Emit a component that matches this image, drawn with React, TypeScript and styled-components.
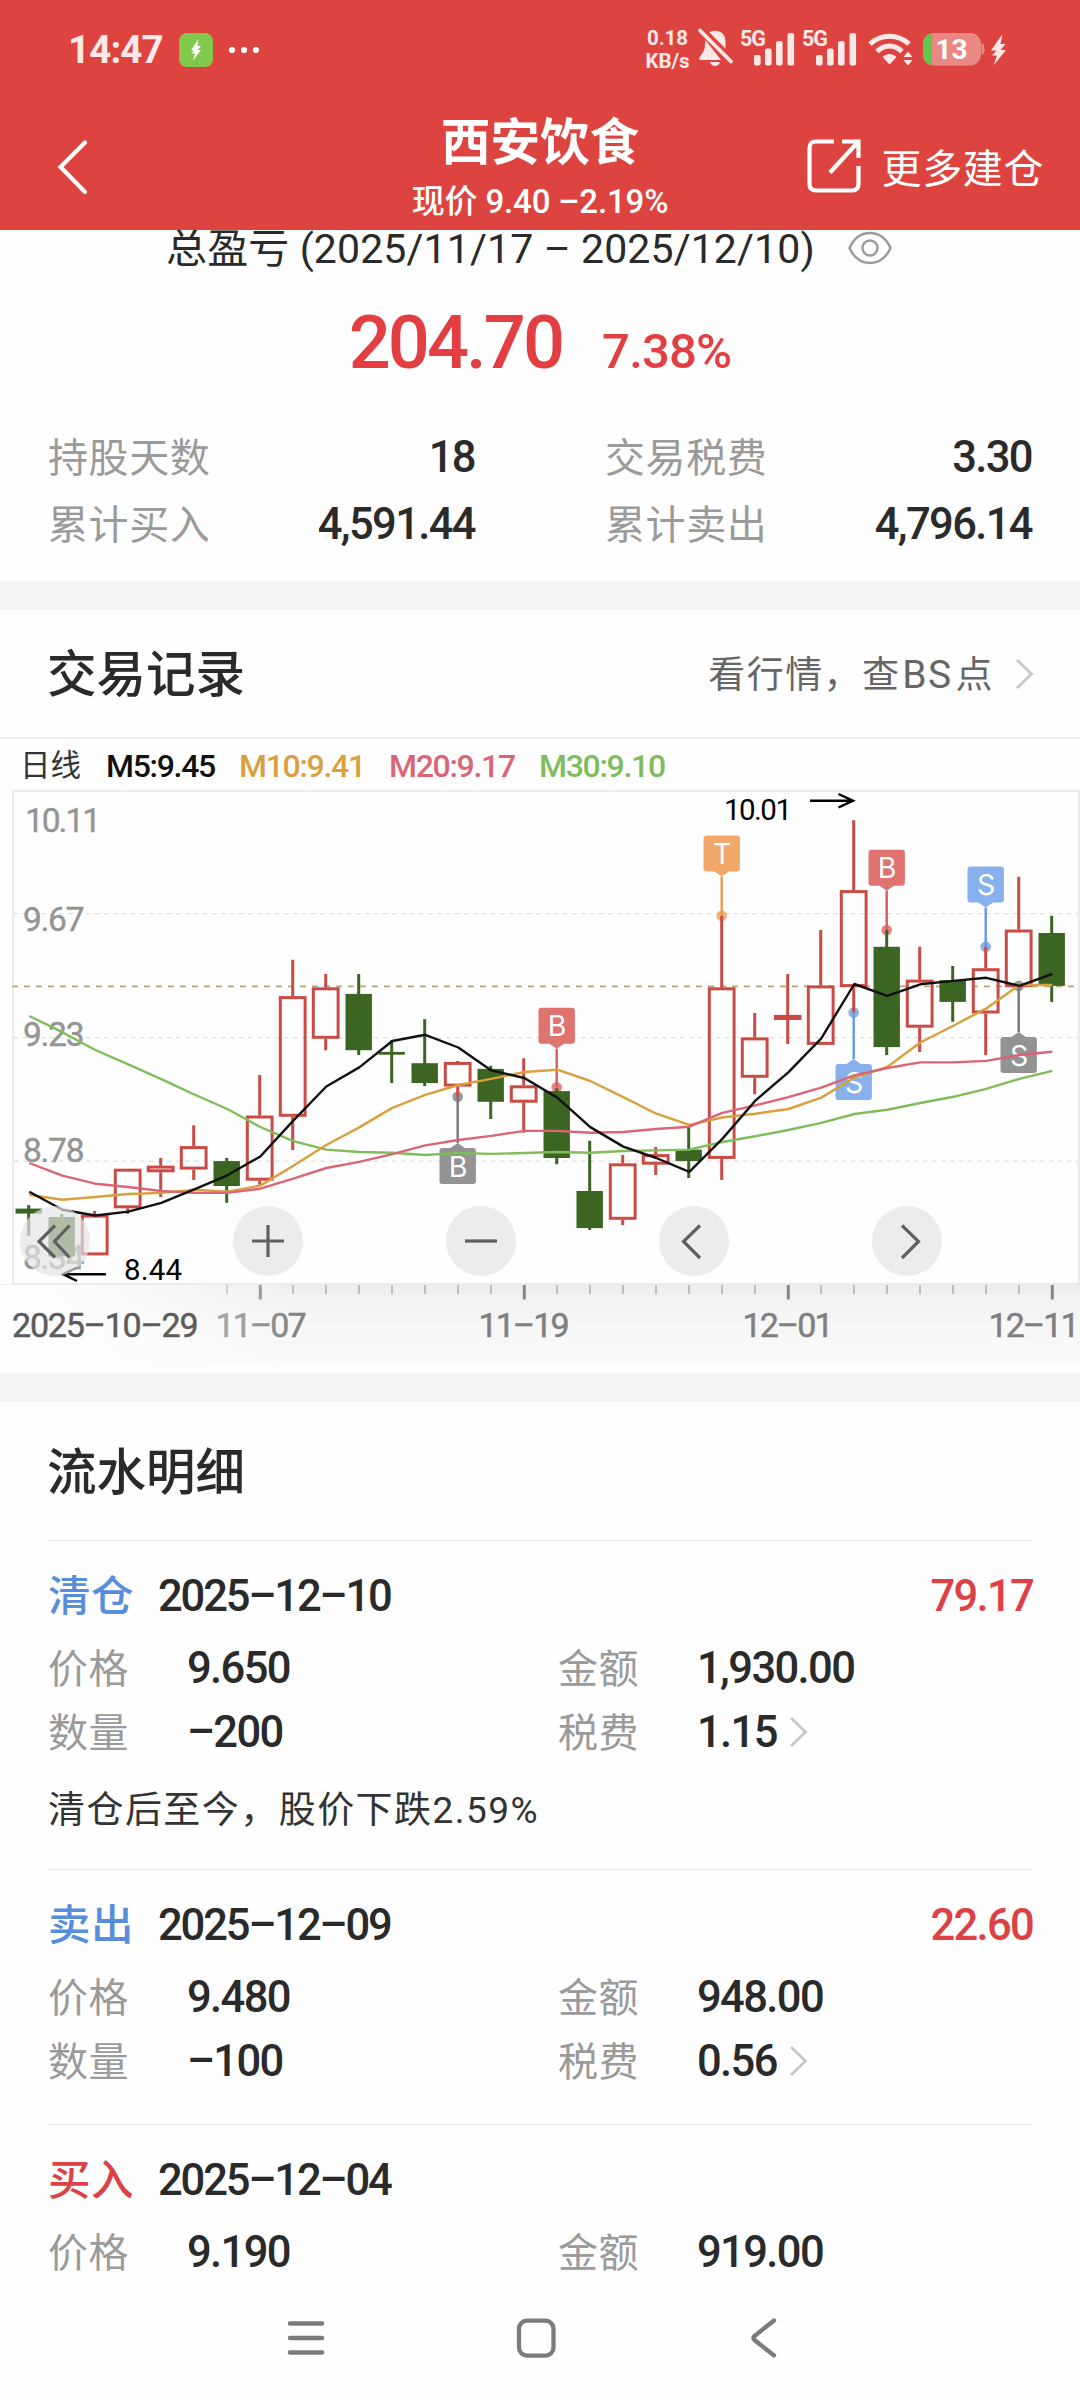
import React from "react";
import styled, { createGlobalStyle } from "styled-components";

const GlobalStyle = createGlobalStyle`
  *, *::before, *::after { box-sizing: border-box; }
  body { margin: 0; background: #fff; }
`;

const Screen = styled.div`
  width: 1080px;
  height: 2400px;
  display: flex;
  flex-direction: column;
  overflow: hidden;
  background: #fefefe;
  color: #2a2a2a;
  font-family: Roboto, "Noto Sans CJK SC", sans-serif;
`;

const TopArea = styled.header`
  flex: none;
  height: 230px;
  background: #dd443f;
  color: #fff;
  display: flex;
  flex-direction: column;
  position: relative;
  z-index: 1;
`;

const StatusBar = styled.div`
  height: 100px;
  display: flex;
  align-items: center;
  justify-content: space-between;
  padding: 0 72px 0 68px;
  color: #ffe9e8;
`;

const StatusGroup = styled.div`
  display: flex;
  align-items: center;
`;

const SystemIcons = styled.div`
  display: flex;
  align-items: center;
  margin-top: -8px;
`;

const Clock = styled.span`
  width: 111px;
  font-size: 38.5px;
  font-weight: 700;
  letter-spacing: -0.9px;
  line-height: 40px;
`;

const Speed = styled.div`
  width: 44px;
  margin-right: 1.5px;
  display: flex;
  flex-direction: column;
  align-items: center;
  font-size: 20.5px;
  font-weight: 700;
  line-height: 23px;
  white-space: nowrap;
`;

const Signals = styled.div`
  display: flex;
  margin: 0 6px 0 -3px;
`;

const TitleBar = styled.div`
  height: 130px;
  display: grid;
  grid-template-columns: 1fr 400px 1fr;
  align-items: center;
`;

const BackSlot = styled.div`
  padding: 3px 0 0 56px;
  display: flex;
`;

const TitleBlock = styled.div`
  display: flex;
  flex-direction: column;
  align-items: center;
  padding-top: 8px;
`;

const Title = styled.h1`
  margin: 0;
  font-size: 49.5px;
  line-height: 66px;
  font-weight: 700;
`;

const Quote = styled.div`
  font-size: 33px;
  line-height: 52px;
  font-weight: 500;
  letter-spacing: -0.15px;
  white-space: pre;
`;

const MoreLink = styled.div`
  display: flex;
  align-items: center;
  justify-content: flex-end;
  gap: 21px;
  padding: 1px 36px 0 0;
  font-size: 40px;
  letter-spacing: 0.6px;
`;

const Content = styled.main`
  flex: 1;
  min-height: 0;
  overflow: hidden;
`;

const Summary = styled.section`
  height: 351px;
  overflow: hidden;
`;

const Period = styled.div`
  height: 60px;
  margin-top: -15px;
  padding-left: 166px;
  display: flex;
  align-items: center;
  gap: 34px;
  font-size: 41px;
  white-space: pre;

  svg {
    margin-top: 5px;
  }
`;

const PeriodText = styled.span`
  width: 648px;
  letter-spacing: 0.13px;
`;

const ProfitRow = styled.div`
  height: 118px;
  display: flex;
  justify-content: center;
  align-items: baseline;
  gap: 40px;
  color: #e33e41;
  font-weight: 500;
  line-height: 136px;
`;

const Profit = styled.span`
  font-size: 74px;
  letter-spacing: -2.9px;
`;

const ProfitRate = styled.span`
  font-size: 49px;
  letter-spacing: -0.8px;
`;

const StatGrid = styled.div`
  display: grid;
  grid-template-columns: 427px 427px;
  grid-auto-rows: 67px;
  column-gap: 130px;
  padding: 29px 0 0 48px;
`;

const Stat = styled.div`
  display: flex;
  align-items: center;
  justify-content: space-between;
`;

const Label = styled.span<{ $drop?: number }>`
  padding-top: ${(p) => p.$drop ?? 3}px;
  font-size: 40px;
  letter-spacing: 0.6px;
  line-height: 56px;
  color: #9a9a9a;
`;

const Figure = styled.span<{ $drop?: number }>`
  padding-top: ${(p) => p.$drop ?? 0}px;
  font-size: 43.5px;
  letter-spacing: -1.6px;
  font-weight: 500;
`;

const Band = styled.div`
  height: 29px;
  background: #f4f4f4;
`;

const SectionHead = styled.div<{ $height: number; $lined?: boolean }>`
  height: ${(p) => p.$height}px;
  display: flex;
  align-items: center;
  justify-content: space-between;
  padding: 0 46px 0 47px;
  border-bottom: ${(p) => (p.$lined ? "2px solid #efefef" : "none")};
`;

const SectionTitle = styled.h2`
  margin: 0;
  padding-top: 3px;
  font-size: 49.5px;
  line-height: 60px;
  font-weight: 500;
`;

const QuoteLink = styled.div`
  display: flex;
  align-items: center;
  gap: 21px;
  color: #666;
  font-size: 37px;
  letter-spacing: 1.4px;
  line-height: 50px;

  > span {
    padding-top: 3px;
  }
`;

const Latin = styled.span`
  margin: 0 3px 0 2px;
  font-size: 39px;
`;

const Legend = styled.div`
  height: 51px;
  display: flex;
  align-items: center;
  gap: 25px;
  padding: 2px 0 0 20px;
  font-size: 32px;
  font-weight: 500;
  letter-spacing: -1.3px;
`;

const LegendItem = styled.span<{ $color: string; $width: number }>`
  color: ${(p) => p.$color};
  width: ${(p) => p.$width}px;
  white-space: nowrap;
`;

const LegendName = styled.span`
  width: 61px;
  font-size: 30.5px;
  letter-spacing: 0;
  line-height: 44px;
  font-weight: 400;
  white-space: nowrap;
  color: #333;
`;

const ChartBox = styled.div`
  position: relative;
  height: 583px;
`;

const Plot = styled.svg`
  display: block;
  width: 1080px;
  height: 583px;
  font-family: Roboto, "Noto Sans CJK SC", sans-serif;
`;

const Controls = styled.div`
  position: absolute;
  left: 20px;
  top: 416px;
  display: flex;
  gap: 143px;
`;

const RoundButton = styled.button`
  width: 70px;
  height: 70px;
  padding: 0;
  border: 0;
  border-radius: 50%;
  background: rgba(227, 227, 227, 0.69);
  display: flex;
  align-items: center;
  justify-content: center;
`;

const Record = styled.article`
  margin: 0 47px 0 48px;
  padding-top: 19px;
  border-top: 1.5px solid #ececec;
`;

const RecordHead = styled.div`
  height: 72px;
  margin-bottom: 4px;
  display: flex;
  align-items: center;
`;

const Action = styled.span<{ $color: string }>`
  width: 110px;
  padding-top: 2px;
  font-size: 42.5px;
  letter-spacing: 0.5px;
  line-height: 56px;
  font-weight: 500;
  color: ${(p) => p.$color};
`;

const DateText = styled.span`
  flex: 1;
  font-size: 43.5px;
  font-weight: 500;
  letter-spacing: -2.1px;
`;

const Gain = styled.span`
  font-size: 43.5px;
  font-weight: 500;
  letter-spacing: -1.7px;
  color: #db4145;
`;

const RecordRow = styled.div`
  height: 64px;
  display: grid;
  grid-template-columns: 139px 371px 139px auto;
  align-items: center;
`;

const FigureCell = styled.div`
  display: flex;
  align-items: center;
  gap: 12px;
`;

const Note = styled.p`
  margin: 3px 0 14px;
  height: 88px;
  line-height: 88px;
  font-size: 37px;
  letter-spacing: 1.45px;
  color: #333;
`;

const RecordEnd = styled.div`
  height: 31px;
`;

const NavBar = styled.nav`
  flex: none;
  height: 112px;
  background: #fefefe;
  display: flex;
  align-items: center;
  padding: 0 0 12px 286px;
  gap: 189px;
`;

const Chevron = () => (
  <svg width="19" height="30" viewBox="0 0 19 30" fill="none" stroke="#c8c8c8" strokeWidth="2.8">
    <path d="M2 1 L16.5 15 L2 29" />
  </svg>
);

const SignalBars = () => (
  <svg width="62" height="40" viewBox="0 0 62 40">
    <text x="4" y="19.500" fontSize="21.500" fontWeight="700" fill="#ffe9e8" textLength="26">5G</text>
    <g fill="#ffe9e8">
      <rect x="18" y="29" width="6.600" height="10.500" rx="2" />
      <rect x="29" y="22.500" width="6.600" height="17" rx="2" />
      <rect x="40" y="15" width="6.600" height="24.500" rx="2" />
      <rect x="51.500" y="7" width="6.600" height="32.500" rx="2" />
    </g>
  </svg>
);

type Candle = [up: boolean, top: number, bottom: number, high: number, low: number];

const candles: Candle[] = [
  [false, 1208.6, 1213.6, 1205.1, 1235.8],
  [false, 1217, 1256.4, 1214, 1256.4],
  [true, 1214.7, 1255.3, 1210.9, 1255.3],
  [true, 1168.8, 1208.2, 1168.8, 1213.9],
  [true, 1165.7, 1172.2, 1158, 1197],
  [true, 1146.2, 1169.5, 1125.2, 1179.9],
  [false, 1161.1, 1186, 1158, 1202.8],
  [true, 1115.6, 1180.6, 1075, 1184.8],
  [true, 996.2, 1116.7, 959.8, 1150],
  [true, 987.4, 1038.7, 974, 1050.2],
  [false, 993.9, 1050.2, 974, 1055.1],
  [false, 1051.9, 1054.7, 1040.2, 1083],
  [false, 1063.2, 1083, 1019.2, 1086.1],
  [true, 1062, 1086.5, 1060.9, 1096.8],
  [false, 1068.9, 1101.8, 1065.8, 1119],
  [true, 1085.4, 1102.6, 1058.2, 1132.8],
  [false, 1091.1, 1158, 1088.4, 1164.2],
  [false, 1191, 1228.1, 1140.8, 1230],
  [true, 1163.4, 1219.7, 1155, 1225],
  [true, 1154.2, 1164.6, 1147, 1174.9],
  [false, 1149.6, 1161.1, 1126.7, 1178],
  [true, 987.4, 1158.8, 915.8, 1179.9],
  [true, 1037.5, 1077.7, 1013, 1094.2],
  [true, 1015, 1019.9, 974, 1044],
  [true, 985.5, 1044.8, 930, 1044.8],
  [true, 890.2, 987, 820.2, 1012.6],
  [false, 946.8, 1047.1, 930, 1055.1],
  [true, 979.7, 1027.6, 946.8, 1052],
  [false, 980.1, 1001.9, 966, 1021.8],
  [true, 968.3, 1013.4, 946.8, 1055.1],
  [true, 929.6, 987, 876.8, 987],
  [false, 933, 985.9, 915.8, 1001.9],
];

const averages: { color: string; values: number[] }[] = [
  { color: "#7fbd5c", values: [1016, 1032.2, 1050, 1064.3, 1079.2, 1094.5, 1109, 1127, 1141.2, 1149.6, 1152, 1152.7, 1155, 1153, 1153.9, 1153, 1152, 1152.7, 1151, 1150.4, 1149.6, 1142, 1136.2, 1130, 1122.9, 1114, 1109.8, 1103, 1096.8, 1088.8, 1078.9, 1070.8] },
  { color: "#d9a03f", values: [1194.8, 1199.8, 1197, 1194, 1192.9, 1189.8, 1191.7, 1185.6, 1165.7, 1145, 1127.4, 1107.9, 1094.9, 1085, 1078.9, 1072, 1069.7, 1081, 1097.2, 1113.7, 1124.8, 1117.5, 1113.7, 1109, 1097.6, 1077.7, 1067, 1042.5, 1025.7, 1008.4, 985, 985] },
  { color: "#d96577", values: [1163, 1175.7, 1183.7, 1187, 1191, 1192.9, 1192.9, 1188.7, 1178.7, 1168, 1161.9, 1154.2, 1145.4, 1140, 1135.9, 1130.9, 1130.9, 1132.8, 1132, 1129, 1126.7, 1112.9, 1105.3, 1097.2, 1087.7, 1075.4, 1068, 1062.4, 1062.4, 1060.9, 1055, 1051.7] },
  { color: "#111", values: [1191.7, 1209.7, 1215.5, 1211.6, 1202.8, 1189.4, 1175.3, 1156.5, 1120.6, 1086.5, 1067.4, 1041, 1034.8, 1047.5, 1070.4, 1078, 1097.6, 1127.1, 1146.6, 1158, 1171.8, 1138.9, 1100.7, 1072.3, 1038.3, 984, 995.8, 984.3, 980.9, 977.8, 985.9, 974] },
];

const markers = [
  { at: 21, dot: 915.8, box: 835.5, text: "T", fill: "#f2a86b", stem: "#ea9a50" },
  { at: 16, dot: 1087.3, box: 1007.7, text: "B", fill: "#df736f", stem: "#da5a58" },
  { at: 13, dot: 1096.8, box: 1148, text: "B", fill: "#939393", stem: "#777" },
  { at: 26, dot: 930, box: 849.8, text: "B", fill: "#df736f", stem: "#da5a58" },
  { at: 29, dot: 946.8, box: 866.5, text: "S", fill: "#88b0ec", stem: "#6497e4" },
  { at: 25, dot: 1012.6, box: 1064, text: "S", fill: "#88b0ec", stem: "#6497e4" },
  { at: 30, dot: 985.9, box: 1037.1, text: "S", fill: "#939393", stem: "#777" },
];

const xAt = (i: number) => 28.7 + 33 * i;

const KLine = () => (
  <Plot viewBox="0 790 1080 583">
    <defs>
      <linearGradient id="axisShade" x1="0" y1="0" x2="0" y2="1">
        <stop offset="0" stopColor="#eeeeee" />
        <stop offset="0.5" stopColor="#f7f7f7" />
        <stop offset="1" stopColor="#fafafa" />
      </linearGradient>
      <linearGradient id="axisFade" x1="0" y1="0" x2="1" y2="0">
        <stop offset="0" stopColor="#fefefe" />
        <stop offset="0.3" stopColor="#fefefe" stopOpacity="0.85" />
        <stop offset="1" stopColor="#fefefe" stopOpacity="0" />
      </linearGradient>
    </defs>

    <rect x="0" y="1284" width="1080" height="82.500" fill="url(#axisShade)" />
    {candles.map((_, i) =>
      i < 6 ? null : i % 8 === 7 ? (
        <rect key={i} x={xAt(i) - 0.9} y="1285" width="3" height="14.500" fill="#888" />
      ) : (
        <rect key={i} x={xAt(i) - 0.7} y="1285" width="2" height="9" fill="#bdbdbd" />
      )
    )}
    <g fontSize="34" fill="#808080" stroke="#808080" strokeWidth="0.500">
      <text x="215.500" y="1336.800" textLength="91">11–07</text>
      <text x="478.500" y="1336.800" textLength="91">11–19</text>
      <text x="742.500" y="1336.800" textLength="91">12–01</text>
      <text x="988.500" y="1336.800" textLength="91">12–11</text>
    </g>
    <rect x="0" y="1285" width="300" height="82" fill="url(#axisFade)" />
    <text x="12" y="1336.800" textLength="186.500" fontSize="34" fill="#5c5c5c" stroke="#5c5c5c" strokeWidth="0.500">2025–10–29</text>

    <rect x="13" y="791" width="1066" height="493" fill="none" stroke="#ebebeb" strokeWidth="2" />
    <g stroke="#e0e0e0" strokeWidth="1.200" strokeDasharray="4.500 4.500">
      <path d="M14 913.600H1078M14 1037.600H1078M14 1161.200H1078" />
    </g>
    <path d="M12 986.300H1078" stroke="#b5a779" strokeWidth="1.800" strokeDasharray="6 6" />

    <g fontSize="33.500" fill="#949494" stroke="#949494" strokeWidth="0.400">
      <text x="25" y="831.500" textLength="76">10.11</text>
      <text x="23" y="930.800" textLength="61.500">9.67</text>
      <text x="23" y="1046" textLength="61.500">9.23</text>
      <text x="23" y="1161.500" textLength="61.500">8.78</text>
      <text x="23" y="1268.800" textLength="61.500">8.34</text>
    </g>

    {markers.map((m) => {
      const x = xAt(m.at);
      const above = m.box < m.dot;
      const tip = above ? m.box + 41 : m.box - 5;
      const edge = above ? m.box + 35.5 : m.box + 0.5;
      return (
        <g key={m.at}>
          <path d={`M${x} ${tip}V${m.dot}`} stroke={m.stem} strokeWidth="2.400" />
          <circle cx={x} cy={m.dot} r="5.300" fill={m.stem} opacity="0.750" />
          <rect x={x - 18.2} y={m.box} width="36.400" height="36" rx="3" fill={m.fill} />
          <path d={`M${x - 8} ${edge}L${x} ${tip}L${x + 8} ${edge}Z`} fill={m.fill} />
          <text x={x + 0.5} y={m.box + 28.6} fontSize="28.500" fontFamily="Inter, sans-serif" fill="#fff" textAnchor="middle">{m.text}</text>
        </g>
      );
    })}

    {candles.map(([up, top, bottom, high, low], i) => {
      const x = xAt(i);
      if (!up) {
        return (
          <g key={i} fill="#3d6522">
            <rect x={x - 13.2} y={top} width="26.400" height={bottom - top} />
            <rect x={x - 1.5} y={high} width="3" height={low - high} />
          </g>
        );
      }
      return (
        <g key={i} fill="none" stroke="#c94b44" strokeWidth="3">
          <path d={`M${x} ${high}V${top}M${x} ${bottom}V${low}`} />
          <rect x={x - 12.4} y={top + 1.4} width="24.800" height={Math.max(bottom - top - 2.8, 0)} />
        </g>
      );
    })}

    {averages.map((line) => (
      <polyline
        key={line.color}
        points={line.values.map((v, i) => `${xAt(i) + 0.6},${v}`).join(" ")}
        fill="none"
        stroke={line.color}
        strokeWidth="2.400"
        strokeLinejoin="round"
      />
    ))}

    <g fontSize="29.500" fill="#000">
      <text x="724" y="819.700" textLength="68">10.01</text>
      <text x="124" y="1280.200" textLength="58">8.44</text>
    </g>
    <g fill="none" stroke="#000" strokeWidth="2.400">
      <path d="M810 800.700H853M838.500 794L853 800.700L838.500 807.500" />
      <path d="M106 1274.200H63M77 1267.500L63 1274.200L77 1281" />
    </g>
  </Plot>
);

const glyphs = [
  "M35 19.500L19 35.500L35 51.500M49.500 19.500L34.500 35.500L49.500 51.500",
  "M19 35H51M35 19V51",
  "M19 35H51",
  "M41 19.500L24.500 35.500L41 52",
  "M30 19.500L46.500 35.500L30 52",
];

type Entry = {
  action: string;
  color: string;
  date: string;
  gain?: string;
  price: string;
  amount: string;
  qty: string;
  fee: string;
  note?: string;
};

const entries: Entry[] = [
  { action: "清仓", color: "#588ddb", date: "2025–12–10", gain: "79.17", price: "9.650", amount: "1,930.00", qty: "–200", fee: "1.15", note: "清仓后至今，股价下跌2.59%" },
  { action: "卖出", color: "#588ddb", date: "2025–12–09", gain: "22.60", price: "9.480", amount: "948.00", qty: "–100", fee: "0.56" },
  { action: "买入", color: "#db4145", date: "2025–12–04", price: "9.190", amount: "919.00", qty: "", fee: "" },
];

const stats = [
  ["持股天数", "18"],
  ["交易税费", "3.30"],
  ["累计买入", "4,591.44"],
  ["累计卖出", "4,796.14"],
];

export default function App() {
  return (
    <>
      <GlobalStyle />
      <Screen>
        <TopArea>
          <StatusBar>
            <StatusGroup>
              <Clock>14:47</Clock>
              <svg width="80" height="36" viewBox="0 0 80 36">
                <rect x="0" y="1" width="34" height="34" rx="8" fill="#82c84b" />
                <path d="M19.500 7L12 18.500H15.500L12.500 21.500H16L14 28.500L22 18H18.500L22 14H18.500Z" fill="#fff" />
                <g fill="#fff">
                  <circle cx="53" cy="18" r="3.100" />
                  <circle cx="65" cy="18" r="3.100" />
                  <circle cx="77" cy="18" r="3.100" />
                </g>
              </svg>
            </StatusGroup>
            <StatusGroup>
              <Speed>
                <span>0.18</span>
                <span>KB/s</span>
              </Speed>
              <SystemIcons>
                <svg width="48" height="40" viewBox="0 0 48 40" fill="#ffe9e8">
                  <path d="M18 6.500C22 4 28 4 31.500 7.500C34 10 34.500 13 34.500 17V23.500Z" />
                  <path d="M14.500 14L30 34H9C8 33 8 31.500 9.500 30C12.500 26 14 23 14 18Z" />
                  <path d="M19 36H29C28 39 26 40 24 40S20 39 19 36Z" />
                  <path d="M9 4.500L40 35.500" stroke="#dd443f" strokeWidth="3" transform="translate(2.600 -2.600)" />
                  <path d="M9 4.500L40 35.500" stroke="#ffe9e8" strokeWidth="3.800" strokeLinecap="round" />
                </svg>
                <Signals>
                  <SignalBars />
                  <SignalBars />
                </Signals>
                <svg width="54" height="40" viewBox="0 0 54 40" fill="none" stroke="#ffe9e8">
                  <path d="M4 18C15 7.500 32 7.500 43 18" strokeWidth="5" />
                  <path d="M11 25.500C18.500 18 28.500 18 36 25.500" strokeWidth="5" />
                  <path d="M16.500 31C21 27 26 27 30.500 31L23.500 38.500Z" fill="#ffe9e8" stroke="none" />
                  <path d="M42 25.500L46.500 31H37.500ZM42 39.500L46.500 34H37.500Z" fill="#ffe9e8" stroke="none" />
                </svg>
                <svg width="88" height="40" viewBox="0 0 88 40">
                  <clipPath id="cell"><rect x="3" y="7" width="58" height="32.500" rx="11" /></clipPath>
                  <g clipPath="url(#cell)">
                    <rect x="3" y="7" width="58" height="33" fill="#ea8884" />
                    <rect x="3" y="7" width="9" height="33" fill="#62c94f" />
                  </g>
                  <path d="M61.500 17Q64.500 17.500 64.500 23T61.500 29Z" fill="#ea8884" />
                  <text x="31.500" y="33" fontSize="28" fontWeight="700" fill="#fff" textAnchor="middle">13</text>
                  <path d="M82.500 8L71 24.500H76.500L72 29.500H77L73.500 39.500L86 24H80.500L85.500 18H80.500Z" fill="#ffe9e8" />
                </svg>
              </SystemIcons>
            </StatusGroup>
          </StatusBar>
          <TitleBar>
            <BackSlot>
              <svg width="34" height="56" viewBox="0 0 34 56" fill="none" stroke="#fff" strokeWidth="4.200" strokeLinecap="round">
                <path d="M29 3.500L4.500 28L29 53" />
              </svg>
            </BackSlot>
            <TitleBlock>
              <Title>西安饮食</Title>
              <Quote>现价 9.40 –2.19%</Quote>
            </TitleBlock>
            <MoreLink>
              <svg width="54" height="56" viewBox="0 0 54 56" fill="none" stroke="#fff" strokeWidth="4.200">
                <path d="M27 3.500H9Q2.500 3.500 2.500 10V46Q2.500 52.500 9 52.500H45Q51.500 52.500 51.500 46V28" />
                <path d="M35 3.500H51.500V20M51 4L23 34.500" />
              </svg>
              更多建仓
            </MoreLink>
          </TitleBar>
        </TopArea>

        <Content>
          <Summary>
            <Period>
              <PeriodText>总盈亏 (2025/11/17 – 2025/12/10)</PeriodText>
              <svg width="44" height="34" viewBox="0 0 44 34" fill="none" stroke="#9b9b9b" strokeWidth="2.400">
                <path d="M1.500 17C6 7 13.500 2 22 2S38 7 42.500 17C38 27 30.500 32 22 32S6 27 1.500 17Z" />
                <circle cx="22" cy="17" r="7.500" />
              </svg>
            </Period>
            <ProfitRow>
              <Profit>204.70</Profit>
              <ProfitRate>7.38%</ProfitRate>
            </ProfitRow>
            <StatGrid>
              {stats.map(([name, value]) => (
                <Stat key={name}>
                  <Label $drop={6}>{name}</Label>
                  <Figure $drop={3}>{value}</Figure>
                </Stat>
              ))}
            </StatGrid>
          </Summary>

          <Band />
          <SectionHead $height={129} $lined>
            <SectionTitle>交易记录</SectionTitle>
            <QuoteLink>
              <span>
                看行情，查<Latin>BS</Latin>点
              </span>
              <Chevron />
            </QuoteLink>
          </SectionHead>
          <Legend>
            <LegendName>日线</LegendName>
            <LegendItem $color="#111" $width={108}>M5:9.45</LegendItem>
            <LegendItem $color="#d9a03f" $width={125}>M10:9.41</LegendItem>
            <LegendItem $color="#d96577" $width={125}>M20:9.17</LegendItem>
            <LegendItem $color="#7fbd5c" $width={125}>M30:9.10</LegendItem>
          </Legend>
          <ChartBox>
            <KLine />
            <Controls>
              {glyphs.map((d) => (
                <RoundButton key={d}>
                  <svg width="70" height="70" viewBox="0 0 70 70" fill="none" stroke="#606060" strokeWidth="3.200">
                    <path d={d} />
                  </svg>
                </RoundButton>
              ))}
            </Controls>
          </ChartBox>

          <Band />
          <SectionHead $height={138}>
            <SectionTitle>流水明细</SectionTitle>
          </SectionHead>
          {entries.map((e) => (
            <Record key={e.date}>
              <RecordHead>
                <Action $color={e.color}>{e.action}</Action>
                <DateText>{e.date}</DateText>
                {e.gain && <Gain>{e.gain}</Gain>}
              </RecordHead>
              <RecordRow>
                <Label>价格</Label>
                <Figure>{e.price}</Figure>
                <Label>金额</Label>
                <Figure>{e.amount}</Figure>
              </RecordRow>
              {e.qty && (
                <RecordRow>
                  <Label>数量</Label>
                  <Figure>{e.qty}</Figure>
                  <Label>税费</Label>
                  <FigureCell>
                    <Figure>{e.fee}</Figure>
                    <Chevron />
                  </FigureCell>
                </RecordRow>
              )}
              {e.note && <Note>{e.note}</Note>}
              {!e.note && e.qty && <RecordEnd />}
            </Record>
          ))}
        </Content>

        <NavBar>
          <svg width="40" height="42" viewBox="0 0 40 42" stroke="#7b7b7b" strokeWidth="4.500" strokeLinecap="round">
            <path d="M4 6.500H36M4 21H36M4 35.500H36" />
          </svg>
          <svg width="42" height="42" viewBox="0 0 42 42" fill="none" stroke="#7b7b7b" strokeWidth="4.300">
            <rect x="4" y="3.600" width="34.500" height="35" rx="8" />
          </svg>
          <svg width="42" height="42" viewBox="0 0 42 42" fill="none" stroke="#7b7b7b" strokeWidth="4.300" strokeLinecap="round" strokeLinejoin="round">
            <path d="M28 3.500L8.500 19Q6.500 21 8.500 23L28 38.500" />
          </svg>
        </NavBar>
      </Screen>
    </>
  );
}
